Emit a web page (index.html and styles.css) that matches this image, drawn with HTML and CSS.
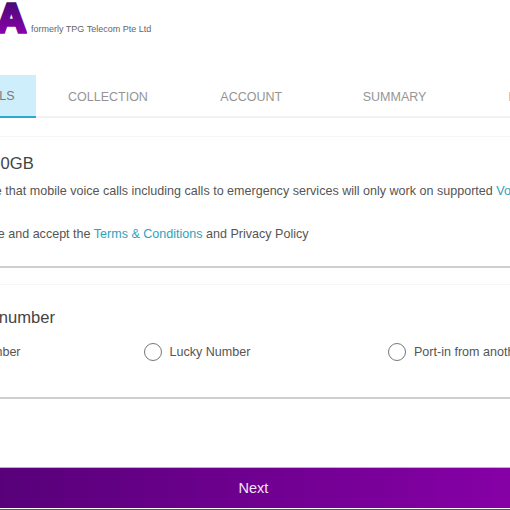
FILE: index.html
```html
<!DOCTYPE html>
<html lang="en">
<head>
<meta charset="utf-8">
<title>Sign up</title>
<link rel="stylesheet" href="styles.css">
</head>
<body>
<div class="page">
  <header class="brand">
    <svg class="logo" width="134" height="36" viewBox="0 0 134 36" aria-label="SIMBA">
      <defs>
        <linearGradient id="logoFill" gradientUnits="userSpaceOnUse" x1="0" y1="3" x2="0" y2="33">
          <stop offset="0" stop-color="#4a0a78"/>
          <stop offset="1" stop-color="#8a00a8"/>
        </linearGradient>
      </defs>
      <text class="logo-text" x="133" y="31.5" text-anchor="end" fill="url(#logoFill)" stroke="url(#logoFill)">SIMBA</text>
    </svg>
    <span class="formerly">formerly TPG Telecom Pte Ltd</span>
  </header>

  <nav class="tabs">
    <a class="tab tab-active">ORDER DETAILS</a>
    <a class="tab">COLLECTION</a>
    <a class="tab">ACCOUNT</a>
    <a class="tab">SUMMARY</a>
    <a class="tab">PAYMENT</a>
  </nav>

  <section class="card card-plan">
    <h2 class="card-title">Mobile Plan 50GB</h2>
    <p class="note">Please kindly note that mobile voice calls including calls to emergency services will only work on supported <a class="link">VoLTE devices</a></p>
    <p class="note note-terms">I've read and agree and accept the <a class="link">Terms &amp; Conditions</a> and Privacy Policy</p>
  </section>

  <section class="card card-number">
    <h2 class="card-title">Choose your number</h2>
    <div class="options">
      <label class="option"><span class="radio"></span>Random Number</label>
      <label class="option"><span class="radio"></span>Lucky Number</label>
      <label class="option"><span class="radio"></span>Port-in from another network</label>
    </div>
  </section>
</div>
<button class="next" type="button"><span class="next-label">Next</span></button>
<div class="edge"></div>
</body>
</html>
```
FILE: styles.css
```css
* { box-sizing: border-box; }

html, body {
  margin: 0;
  height: 510px;
  overflow: hidden;
  background: #fff;
  font-family: "Liberation Sans", Arial, sans-serif;
  color: #555;
}

.page {
  width: 900px;
  margin-left: -107px;
  height: 467px;
}

.brand {
  height: 75px;
  display: flex;
  align-items: flex-start;
}

.logo { flex: none; }

.logo-text {
  font-family: "Liberation Sans", Arial, sans-serif;
  font-size: 41px;
  font-weight: 700;
  stroke-width: 3.5px;
  stroke-linejoin: miter;
}

.formerly {
  margin: 24px 0 0 4px;
  font-size: 9px;
  line-height: 11px;
  color: #666;
}

.tabs {
  display: flex;
  height: 43px;
  border-bottom: 2px solid #f2f2f2;
}

.tab {
  flex: 0 0 143.3px;
  height: 43px;
  display: flex;
  align-items: center;
  justify-content: center;
  font-size: 12.5px;
  color: #959595;
}

.tab-active {
  background: #cfeefc;
  border-bottom: 2px solid #29a9d6;
  color: #7a7a7a;
}

.card {
  padding: 0 7px;
  border-top: 1px solid #f6f6f6;
  border-bottom: 2px solid #cfcfcf;
}

.card-plan {
  height: 132px;
  margin-top: 18px;
  padding-top: 17px;
}

.card-number {
  height: 115px;
  margin-top: 16px;
  padding-top: 23px;
}

.card-title {
  margin: 0;
  font-size: 16.6px;
  line-height: 20px;
  font-weight: 400;
  color: #444;
}

.note {
  margin: 8px 0 0;
  font-size: 12.55px;
  line-height: 18px;
  white-space: nowrap;
}

.note-terms {
  margin: 25px 0 0 -3px;
}

.link { color: #2ba3bd; }

.options {
  display: grid;
  grid-template-columns: repeat(3, 244.5px);
  margin: 14px 0 0 -1px;
}

.option {
  display: flex;
  align-items: center;
  height: 20px;
  font-size: 12.55px;
  white-space: nowrap;
}

.radio {
  flex: none;
  width: 18px;
  height: 18px;
  margin-right: 8px;
  border: 1.5px solid #777;
  border-radius: 50%;
}

.next {
  display: block;
  width: 100%;
  height: 41px;
  padding: 0 3px 0 0;
  border: 0;
  border-top: 1px solid #c9a4d6;
  background: linear-gradient(90deg, #58007a, #8600a6);
  color: #f3e4f8;
  font-family: inherit;
  font-size: 14.5px;
}

.edge {
  height: 1px;
  margin-top: 1px;
  background: #5a5060;
}
```
